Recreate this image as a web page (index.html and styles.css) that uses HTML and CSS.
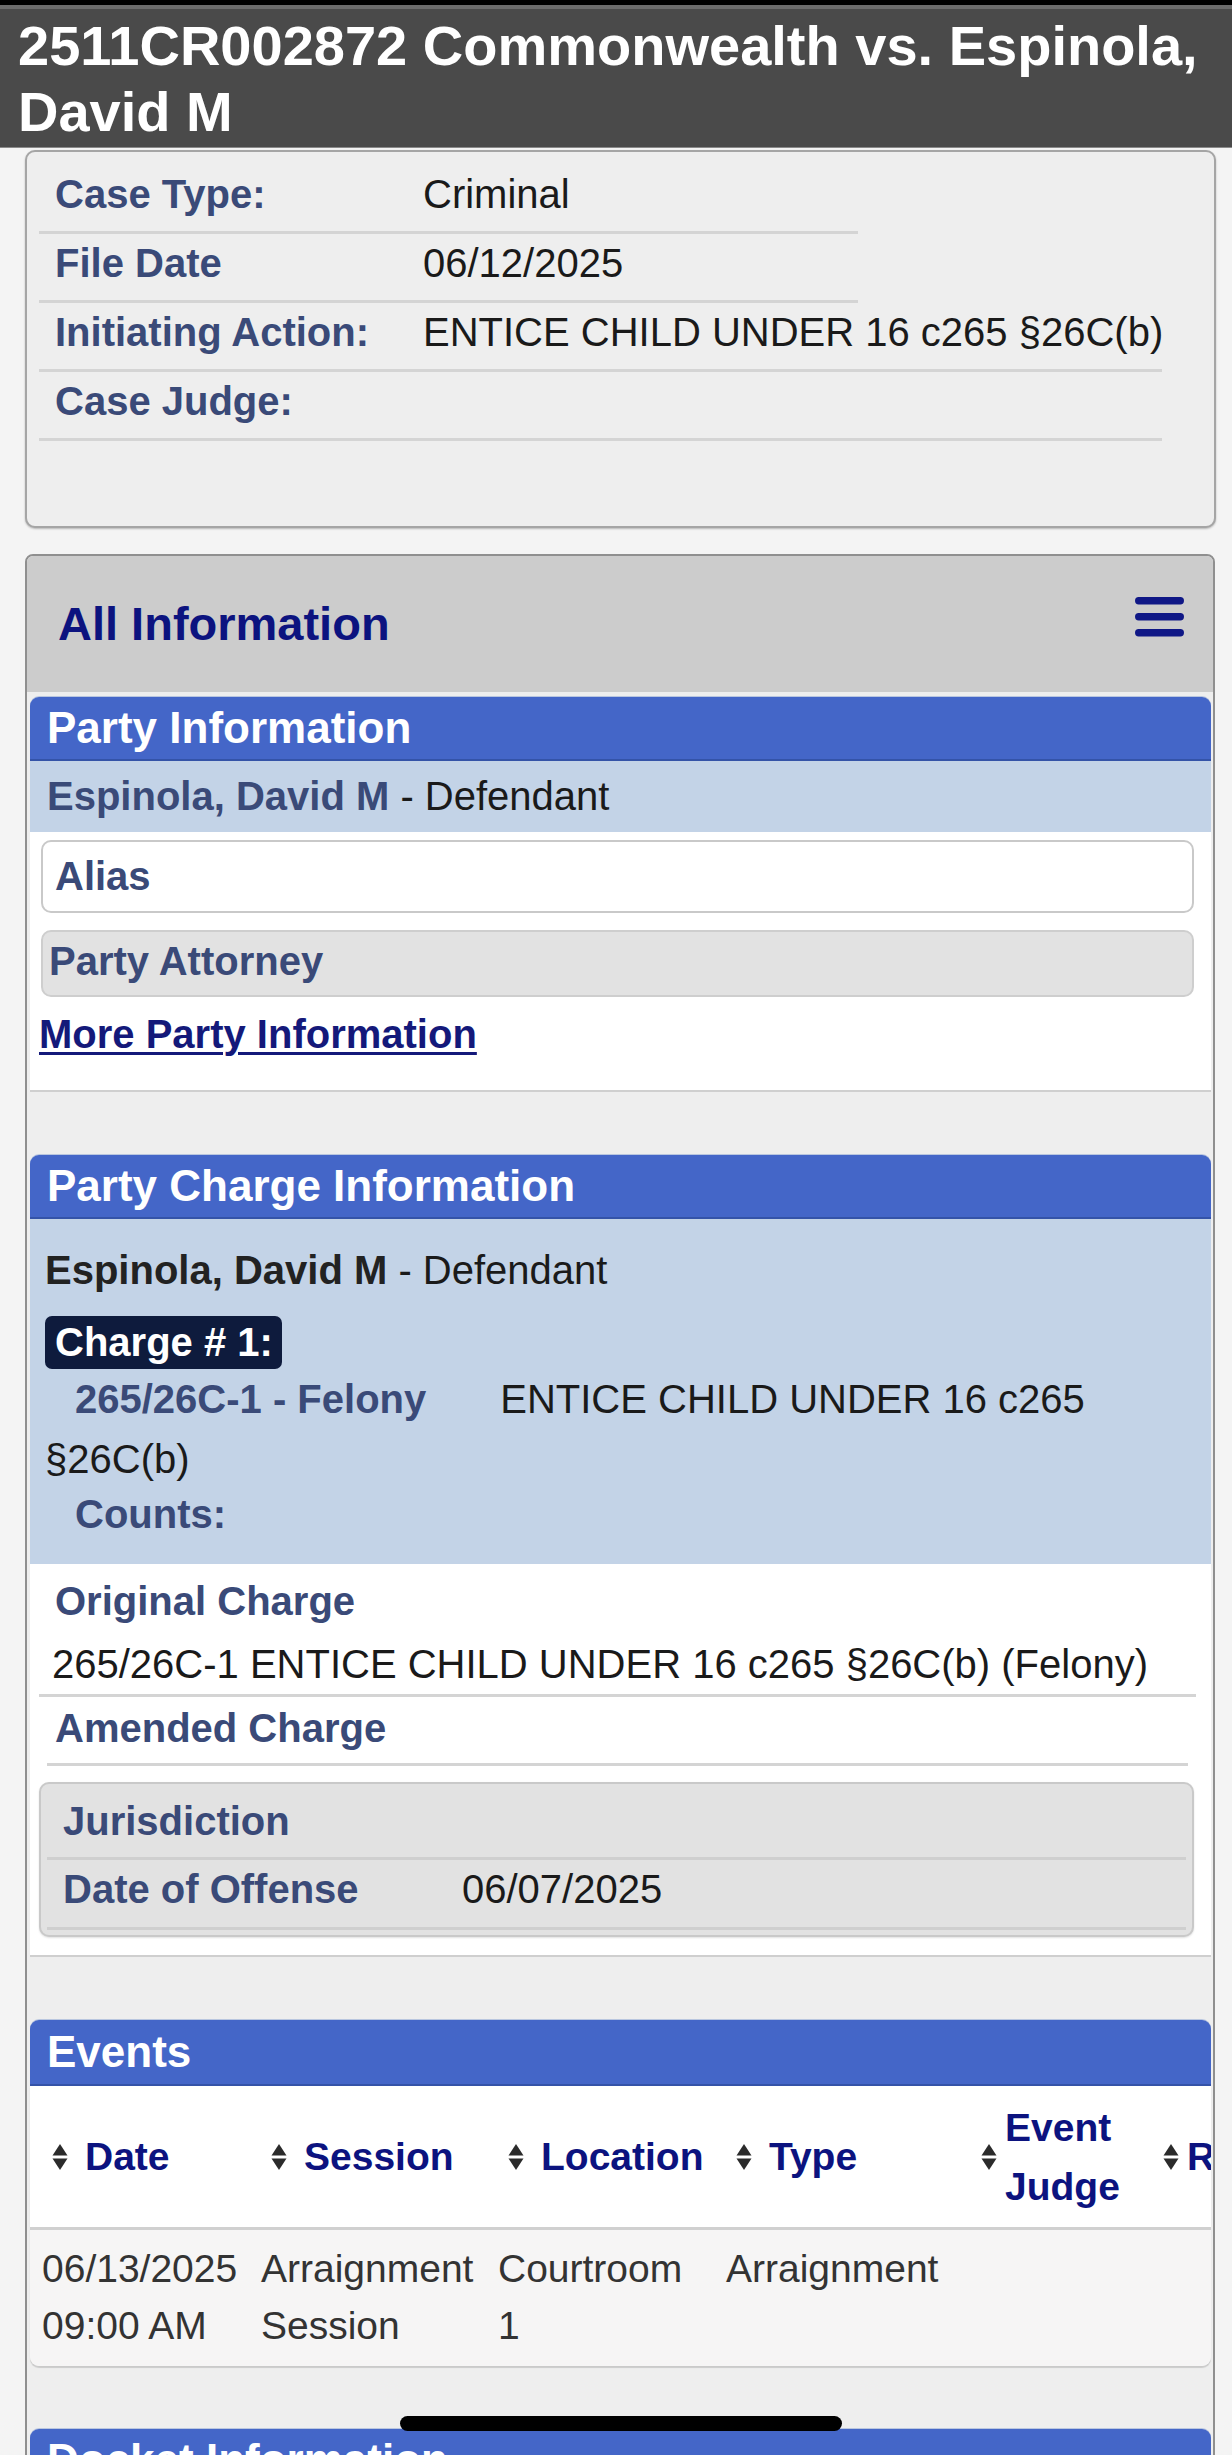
FILE: index.html
```html
<!DOCTYPE html>
<html lang="en">
<head>
<meta charset="utf-8">
<title>2511CR002872 Commonwealth vs. Espinola, David M</title>
<link rel="stylesheet" href="styles.css">
</head>
<body>
<header class="topbar">
  <h1 class="title">2511CR002872 Commonwealth vs. Espinola, David M</h1>
</header>

<section class="case-box">
  <div class="case-row short"><span class="case-label">Case Type:</span><span class="case-value">Criminal</span></div>
  <div class="case-row short"><span class="case-label">File Date</span><span class="case-value">06/12/2025</span></div>
  <div class="case-row"><span class="case-label">Initiating Action:</span><span class="case-value">ENTICE CHILD UNDER 16 c265 §26C(b)</span></div>
  <div class="case-row"><span class="case-label">Case Judge:</span><span class="case-value"></span></div>
</section>

<section class="panel">
  <div class="panel-head">
    <h2 class="panel-title">All Information</h2>
    <svg class="hamburger" width="49" height="40" viewBox="0 0 49 40" aria-hidden="true">
      <rect x="0" y="0" width="49" height="7.5" rx="3.7" fill="#0f1786"/>
      <rect x="0" y="16" width="49" height="7.5" rx="3.7" fill="#0f1786"/>
      <rect x="0" y="32" width="49" height="7.5" rx="3.7" fill="#0f1786"/>
    </svg>
  </div>

  <div class="sections">
    <div class="sec">
      <div class="sec-head">Party Information</div>
      <div class="name-row"><span class="name-slate">Espinola, David M</span> - Defendant</div>
      <div class="sec-body party-body">
        <div class="sub-box alias">Alias</div>
        <div class="sub-box attorney">Party Attorney</div>
        <a class="more-link" href="#">More Party Information</a>
      </div>
    </div>

    <div class="sec">
      <div class="sec-head">Party Charge Information</div>
      <div class="charge-block">
        <div class="charge-name"><span class="name-dark">Espinola, David M</span> - Defendant</div>
        <div class="badge-line"><span class="badge">Charge # 1:</span></div>
        <p class="charge-desc"><span class="charge-code">265/26C-1 - Felony</span>ENTICE CHILD UNDER 16 c265 §26C(b)</p>
        <div class="counts">Counts:</div>
      </div>
      <div class="sec-body charge-body">
        <div class="orig">
          <div class="orig-label">Original Charge</div>
          <div class="orig-value">265/26C-1 ENTICE CHILD UNDER 16 c265 §26C(b) (Felony)</div>
        </div>
        <div class="amended">Amended Charge</div>
        <div class="juris-box">
          <div class="juris-row first"><span class="juris-label">Jurisdiction</span></div>
          <div class="juris-row second"><span class="juris-label">Date of Offense</span><span class="juris-value">06/07/2025</span></div>
        </div>
      </div>
    </div>

    <div class="sec events">
      <div class="sec-head">Events</div>
      <div class="table-wrap">
        <div class="thead">
          <div class="th"><svg class="sort" width="16" height="28" viewBox="0 0 16 28"><polygon points="0.5,12.5 8,1 15.5,12.5" fill="#2b2b2b"/><polygon points="0.5,15.5 8,27 15.5,15.5" fill="#2b2b2b"/></svg><span>Date</span></div>
          <div class="th"><svg class="sort" width="16" height="28" viewBox="0 0 16 28"><polygon points="0.5,12.5 8,1 15.5,12.5" fill="#2b2b2b"/><polygon points="0.5,15.5 8,27 15.5,15.5" fill="#2b2b2b"/></svg><span>Session</span></div>
          <div class="th"><svg class="sort" width="16" height="28" viewBox="0 0 16 28"><polygon points="0.5,12.5 8,1 15.5,12.5" fill="#2b2b2b"/><polygon points="0.5,15.5 8,27 15.5,15.5" fill="#2b2b2b"/></svg><span>Location</span></div>
          <div class="th"><svg class="sort" width="16" height="28" viewBox="0 0 16 28"><polygon points="0.5,12.5 8,1 15.5,12.5" fill="#2b2b2b"/><polygon points="0.5,15.5 8,27 15.5,15.5" fill="#2b2b2b"/></svg><span>Type</span></div>
          <div class="th tight"><svg class="sort" width="16" height="28" viewBox="0 0 16 28"><polygon points="0.5,12.5 8,1 15.5,12.5" fill="#2b2b2b"/><polygon points="0.5,15.5 8,27 15.5,15.5" fill="#2b2b2b"/></svg><span>Event<br>Judge</span></div>
          <div class="th tight"><svg class="sort" width="16" height="28" viewBox="0 0 16 28"><polygon points="0.5,12.5 8,1 15.5,12.5" fill="#2b2b2b"/><polygon points="0.5,15.5 8,27 15.5,15.5" fill="#2b2b2b"/></svg><span>Result</span></div>
        </div>
        <div class="trow">
          <div class="td">06/13/2025<br>09:00 AM</div>
          <div class="td">Arraignment<br>Session</div>
          <div class="td">Courtroom<br>1</div>
          <div class="td">Arraignment</div>
          <div class="td"></div>
          <div class="td"></div>
        </div>
      </div>
    </div>

    <div class="sec">
      <div class="sec-head">Docket Information</div>
    </div>
  </div>
</section>

<div class="home-indicator"></div>
</body>
</html>
```

FILE: styles.css
```css
html, body {
  margin: 0;
  padding: 0;
}

body {
  position: relative;
  height: 2455px;
  overflow: hidden;
  background: #f4f4f4;
  font-family: "Liberation Sans", Arial, Helvetica, sans-serif;
  font-size: 40px;
  color: #1c1c1c;
}

/* ---------- top bar ---------- */
.topbar {
  box-sizing: border-box;
  height: 147px;
  background: #4a4a4a;
  border-top: 5px solid #000;
  box-shadow: inset 0 4px 0 #6c6c6c, 0 1px 0 #8a8a8a;
  padding: 8px 12px 0 18px;
}

.title {
  margin: 0;
  font-size: 56px;
  line-height: 66px;
  font-weight: bold;
  color: #fff;
}

/* ---------- case summary box ---------- */
.case-box {
  margin: 3px 16px 0 25px;
  background: #eeeeee;
  border: 2px solid #a5a5a5;
  border-radius: 10px;
  padding: 13px 0 85px 12px;
  box-shadow: 0 1px 2px rgba(0, 0, 0, 0.25);
}

.case-row {
  display: flex;
  width: 1123px;
  box-sizing: border-box;
  padding: 5px 0 13px 16px;
  line-height: 48px;
  border-bottom: 3px solid #d4d4d4;
}

.case-row.short {
  width: 819px;
}

.case-label {
  width: 368px;
  flex: none;
  font-weight: bold;
  color: #3a4a78;
}

.case-value {
  flex: none;
  white-space: nowrap;
  color: #1a1a1a;
}

/* ---------- All information panel ---------- */
.panel {
  margin: 26px 17px 0 25px;
  border: 2px solid #8f8f8f;
  border-radius: 8px;
  background: #eeeeee;
  padding-bottom: 200px;
}

.panel-head {
  display: flex;
  justify-content: space-between;
  align-items: flex-start;
  background: #cccccc;
  border-radius: 6px 6px 0 0;
  padding: 40px 29px 40px 31px;
}

.panel-title {
  margin: 0;
  font-size: 47px;
  line-height: 56px;
  font-weight: bold;
  color: #0c137f;
}

.hamburger {
  margin-top: 1px;
  display: block;
}

.sections {
  padding: 5px 2px 0 3px;
}

.sec {
  margin-bottom: 63px;
}

.sec-head {
  background: #4466c8;
  color: #fff;
  font-size: 44px;
  font-weight: bold;
  line-height: 62px;
  padding-left: 17px;
  border-radius: 9px 9px 0 0;
  border-bottom: 2px solid #3453a8;
  box-shadow: 0 -1px 0 #b9c6df;
}

.events .sec-head {
  line-height: 64px;
}

.sec-body {
  background: #fff;
  border-bottom: 2px solid #cfcfcf;
}

/* party information */
.name-row {
  background: #c3d3e7;
  line-height: 71px;
  padding-left: 17px;
  color: #1a1a1a;
}

.name-slate {
  font-weight: bold;
  color: #3a4a78;
}

.party-body {
  padding: 8px 17px 32px 9px;
}

.sub-box {
  margin-left: 2px;
  border-radius: 10px;
  font-weight: bold;
  color: #3a4a78;
}

.alias {
  background: #fff;
  border: 2px solid #c9c9c9;
  line-height: 69px;
  padding-left: 12px;
}

.attorney {
  margin-top: 17px;
  background: #e2e2e2;
  border: 2px solid #cecece;
  line-height: 59px;
  padding: 0 0 4px 6px;
}

.more-link {
  display: block;
  width: max-content;
  margin-top: 13px;
  line-height: 48px;
  font-weight: bold;
  color: #14197a;
  text-decoration: underline;
  text-decoration-thickness: 3px;
  text-underline-offset: 4px;
}

/* party charge information */
.charge-block {
  background: #c3d3e7;
  padding: 23px 17px 25px 15px;
}

.charge-name {
  line-height: 57px;
  color: #1a1a1a;
}

.name-dark {
  font-weight: bold;
  color: #222;
}

.badge-line {
  margin-top: 17px;
  height: 53px;
}

.badge {
  display: inline-block;
  vertical-align: top;
  background: #0e1b3d;
  color: #fff;
  font-weight: bold;
  border-radius: 7px;
  padding: 0 9px 0 10px;
  line-height: 53px;
}

.charge-desc {
  margin: 0;
  line-height: 60px;
  color: #1a1a1a;
}

.charge-code {
  margin-left: 30px;
  margin-right: 74px;
  font-weight: bold;
  color: #3a4a78;
}

.counts {
  line-height: 50px;
  padding-left: 30px;
  font-weight: bold;
  color: #3a4a78;
}

.charge-body {
  padding: 0 15px 18px 9px;
}

.orig {
  padding: 13px 0 6px;
  border-bottom: 3px solid #d4d4d4;
}

.orig-label {
  padding-left: 16px;
  line-height: 48px;
  font-weight: bold;
  color: #3a4a78;
}

.orig-value {
  margin-top: 15px;
  padding-left: 13px;
  line-height: 48px;
  color: #1a1a1a;
}

.amended {
  margin: 0 8px;
  padding: 7px 0 11px 8px;
  line-height: 48px;
  border-bottom: 3px solid #d4d4d4;
  font-weight: bold;
  color: #3a4a78;
}

.juris-box {
  margin: 16px 2px 0 0;
  background: #e2e2e2;
  border: 2px solid #c9c9c9;
  border-radius: 10px;
  padding: 0 6px 5px;
  box-shadow: 0 1px 2px rgba(0, 0, 0, 0.12);
}

.juris-row {
  display: flex;
  line-height: 48px;
  padding-left: 16px;
  border-bottom: 3px solid #cfcfcf;
}

.juris-row.first {
  padding-top: 13px;
  padding-bottom: 12px;
}

.juris-row.second {
  padding-top: 5px;
  padding-bottom: 14px;
}

.juris-label {
  width: 399px;
  flex: none;
  font-weight: bold;
  color: #3a4a78;
}

.juris-value {
  color: #1a1a1a;
}

/* events table */
.table-wrap {
  overflow: hidden;
  border-radius: 0 0 9px 9px;
  box-shadow: 0 2px 1px rgba(0, 0, 0, 0.15);
  font-size: 39px;
}

.thead,
.trow {
  display: grid;
  grid-template-columns: 219px 237px 228px 245px 182px 300px;
  padding-left: 12px;
}

.thead {
  background: #fff;
  height: 141px;
  border-bottom: 3px solid #d0d0d0;
  align-items: center;
}

.th {
  display: flex;
  align-items: center;
  gap: 17px;
  padding-left: 10px;
  font-weight: bold;
  color: #0c137f;
  line-height: 59px;
  white-space: nowrap;
}

.th.tight {
  gap: 8px;
}

.sort {
  display: block;
  flex: none;
}

.trow {
  background: #f6f5f5;
  padding-top: 10px;
  padding-bottom: 12px;
}

.td {
  line-height: 57px;
  color: #333;
  white-space: nowrap;
}

/* iOS home indicator overlay */
.home-indicator {
  position: absolute;
  left: 400px;
  top: 2416px;
  width: 442px;
  height: 15px;
  border-radius: 8px;
  background: #000;
}
```
